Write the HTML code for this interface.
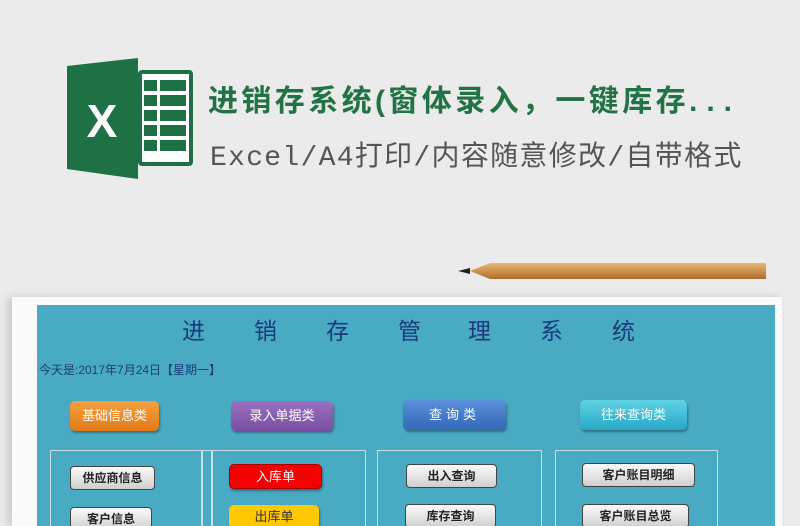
<!DOCTYPE html>
<html style="overflow:hidden;width:800px;height:526px"><head><meta charset="utf-8"><style>
body{margin:0;width:800px;height:526px;background:#ebebeb;position:relative;overflow:hidden;font-family:"Liberation Sans","Noto Sans CJK SC",sans-serif}
.a{position:absolute}
.t1{left:208px;top:76px;font-size:30px;font-weight:bold;color:#217346;letter-spacing:3.4px;white-space:nowrap}
.t2{left:210px;top:134px;font-size:28px;color:#555;white-space:nowrap;font-family:"Liberation Mono","Noto Sans CJK SC",monospace;letter-spacing:1.3px}
.sheet{left:12px;top:297px;width:770px;height:229px;background:#fafafa;box-shadow:-4px 0 8px rgba(0,0,0,.15)}
.teal{left:37px;top:305px;width:738px;height:221px;background:#49aac3}
.btn{position:absolute;border-radius:5px;text-align:center;font-size:13px;color:#fff;box-shadow:1px 2px 2px rgba(0,0,0,.35)}
.g{position:absolute;background:linear-gradient(#fafafa,#cfcfcf);border:1px solid #444;border-radius:4px;font-size:12px;font-weight:bold;color:#222;text-align:center;height:22px;line-height:22px}
.box{position:absolute;border:1px solid #c8dde4;border-bottom:none;top:450px;height:76px}
</style></head><body>
<svg class="a" style="left:60px;top:55px" width="140" height="130">
<rect x="78" y="15" width="55" height="96" rx="4" fill="#1e7145"/>
<rect x="82" y="19" width="47" height="88" fill="#fff"/>
<g fill="#1e7145">
<rect x="100" y="25" width="26" height="11"/><rect x="100" y="40" width="26" height="11"/><rect x="100" y="55" width="26" height="11"/><rect x="100" y="70" width="26" height="11"/><rect x="100" y="85" width="26" height="11"/>
<rect x="84" y="25" width="13" height="11"/><rect x="84" y="40" width="13" height="11"/><rect x="84" y="55" width="13" height="11"/><rect x="84" y="70" width="13" height="11"/><rect x="84" y="85" width="13" height="11"/>
</g>
<polygon points="7,11 78,3 78,124 7,114" fill="#1e7145"/>
<text x="42" y="82" font-size="46" font-weight="bold" fill="#fff" text-anchor="middle" font-family="Liberation Sans">X</text>
</svg>
<div class="a t1">进销存系统(窗体录入，一键库存<span style="letter-spacing:9px">...</span></div>
<div class="a t2">Excel/A4打印/内容随意修改/自带格式</div>
<div class="a" style="left:470px;top:263px;width:296px;height:16px;background:linear-gradient(#e8b874,#c98c45 60%,#a86c30);clip-path:polygon(0 50%,20px 0,100% 0,100% 100%,20px 100%);box-shadow:0 4px 6px rgba(0,0,0,.2)"></div>
<div class="a" style="left:458px;top:268px;width:12px;height:6px;background:#222;clip-path:polygon(0 50%,100% 0,100% 100%)"></div>
<div class="a sheet"></div>
<div class="a teal"></div>
<div class="a" style="left:182px;top:312px;font-size:23px;color:#1a3a7a;white-space:nowrap">
<span style="display:inline-block;width:72px">进</span><span style="display:inline-block;width:72px">销</span><span style="display:inline-block;width:72px">存</span><span style="display:inline-block;width:70px">管</span><span style="display:inline-block;width:72px">理</span><span style="display:inline-block;width:72px">系</span><span>统</span></div>
<div class="a" style="left:39px;top:361px;font-size:12px;color:#1a3a7a">今天是:2017年7月24日【星期一】</div>
<div class="btn" style="left:70px;top:401px;width:89px;height:30px;line-height:30px;background:linear-gradient(#f6a040,#e07a18)">基础信息类</div>
<div class="btn" style="left:231px;top:401px;width:102px;height:30px;line-height:30px;background:linear-gradient(#9a70c0,#7a4fa3)">录入单据类</div>
<div class="btn" style="left:403px;top:400px;width:103px;height:30px;line-height:30px;background:linear-gradient(#5a90da,#3468b8);letter-spacing:4px">查询类</div>
<div class="btn" style="left:580px;top:400px;width:107px;height:30px;line-height:30px;background:linear-gradient(#5fd2e6,#28a8c8)">往来查询类</div>
<div class="box" style="left:50px;width:150px"></div>
<div class="box" style="left:202px;width:8px"></div>
<div class="box" style="left:212px;width:152px"></div>
<div class="box" style="left:377px;width:163px"></div>
<div class="box" style="left:555px;width:161px"></div>
<div class="g" style="left:70px;top:466px;width:83px">供应商信息</div>
<div class="g" style="left:70px;top:507px;width:80px">客户信息</div>
<div class="btn" style="left:229px;top:464px;width:91px;height:23px;line-height:23px;background:#f30000;border:1px solid #a00">入库单</div>
<div class="btn" style="left:229px;top:505px;width:90px;height:24px;line-height:24px;background:#ffc800;color:#333">出库单</div>
<div class="g" style="left:406px;top:464px;width:89px">出入查询</div>
<div class="g" style="left:405px;top:504px;width:89px">库存查询</div>
<div class="g" style="left:582px;top:463px;width:111px">客户账目明细</div>
<div class="g" style="left:582px;top:504px;width:105px">客户账目总览</div>
</body></html>
